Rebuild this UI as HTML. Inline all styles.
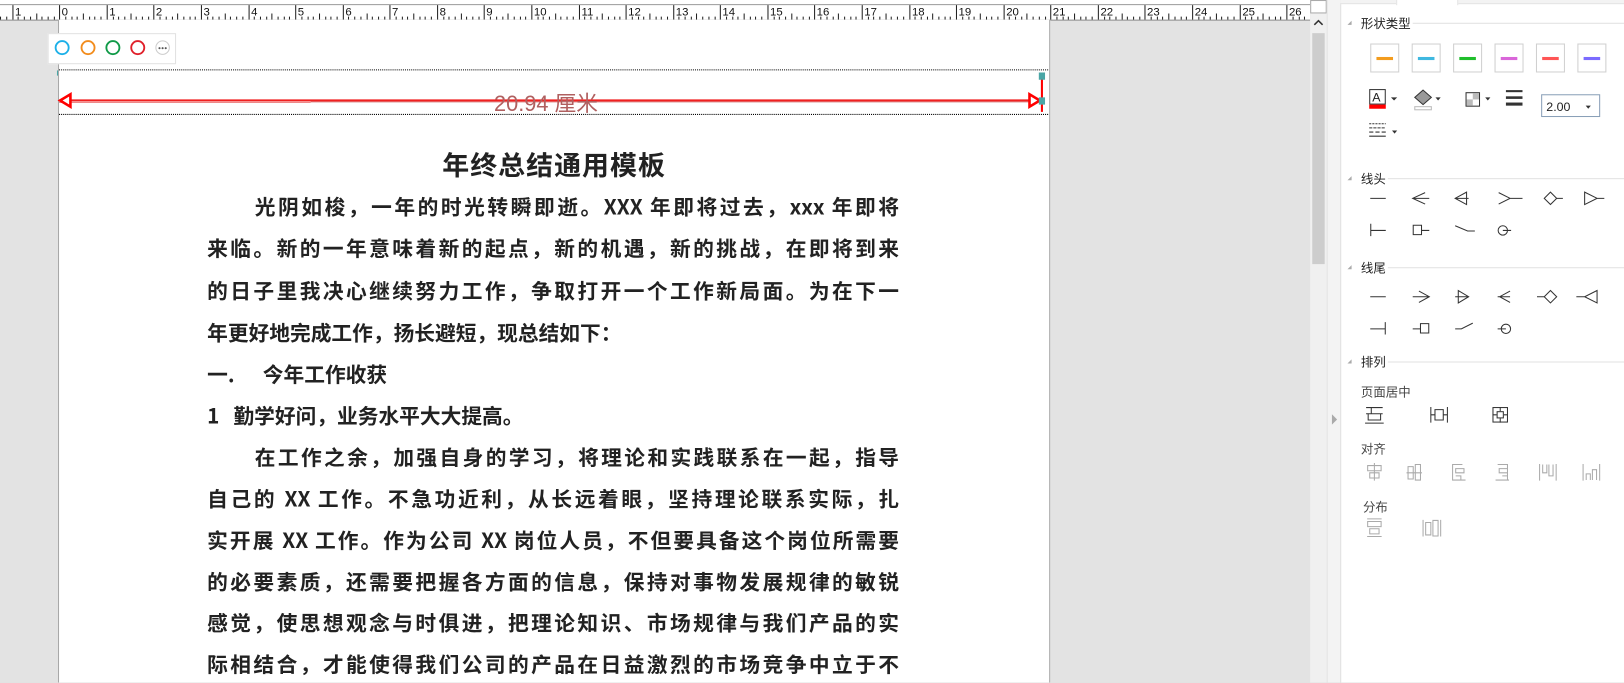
<!DOCTYPE html>
<html><head><meta charset="utf-8">
<style>
*{margin:0;padding:0;box-sizing:border-box}
body{width:1624px;height:682px;overflow:hidden;background:#e3e3e3;position:relative;font-family:"Liberation Sans","Noto Sans CJK SC",sans-serif}
#wrap{position:absolute;left:0;top:0;width:1568px;height:659px;transform:scale(1.03571);transform-origin:0 0;overflow:hidden;background:#e3e3e3}
.abs{position:absolute}
#page{left:56px;top:19px;width:958px;height:663px;background:#fff;border-left:1px solid #a8a8a8;border-right:1px solid #a8a8a8}
.txt{position:absolute;left:200px;width:668px;font-size:20px;font-weight:bold;color:#222;font-family:"Noto Sans CJK SC",sans-serif;white-space:nowrap;text-align:justify;text-align-last:justify;line-height:26px;letter-spacing:0px}
.pn{font-family:"Liberation Sans","Noto Sans CJK SC",sans-serif;font-size:12px;color:#222;position:absolute}
.sec{position:absolute;height:1px;background:#e2e2e2}
.tri{position:absolute;width:0;height:0;border-left:4px solid transparent;border-bottom:4px solid #aaa}
.cb{position:absolute;width:28px;height:28px;border:1px solid #d0d0d0;background:#fff}
.cb i{position:absolute;left:5px;top:12px;width:16px;height:3px}
</style></head><body><div id="wrap">
<svg class="abs" style="left:0;top:0" width="1265" height="20" id="ruler">
<rect x="0" y="0" width="1265" height="20" fill="#fff"/>
<line x1="0" y1="4.5" x2="1265" y2="4.5" stroke="#999"/>
<line x1="0" y1="19.5" x2="1265" y2="19.5" stroke="#888"/>
</svg>
<div id="page" class="abs"></div>
<div class="abs" style="left:46px;top:32px;width:124px;height:30px;background:#fff;border:1px solid #e2e2e2"></div>
<svg class="abs" style="left:46px;top:32px" width="124" height="30">
<circle cx="14" cy="14" r="6.3" fill="none" stroke="#1cb0e8" stroke-width="1.8"/>
<circle cx="39" cy="14" r="6.3" fill="none" stroke="#f28c1c" stroke-width="1.8"/>
<circle cx="63" cy="14" r="6.3" fill="none" stroke="#109a48" stroke-width="1.8"/>
<circle cx="87" cy="14" r="6.3" fill="none" stroke="#e0202a" stroke-width="1.8"/>
<circle cx="111" cy="14" r="6.5" fill="#fff" stroke="#ccc"/><circle cx="108" cy="14.5" r="1" fill="#555"/><circle cx="111" cy="14.5" r="1" fill="#555"/><circle cx="114" cy="14.5" r="1" fill="#555"/>
</svg>
<svg class="abs" style="left:0;top:60px" width="1020" height="60">
<line x1="57" y1="7.5" x2="1013" y2="7.5" stroke="#000" stroke-dasharray="1,1"/>
<line x1="57" y1="50.5" x2="1013" y2="50.5" stroke="#000" stroke-dasharray="1,1"/>
<line x1="57" y1="37" x2="1005" y2="37" stroke="#f02020" stroke-width="2"/>
<line x1="57" y1="39" x2="300" y2="39" stroke="#e88" stroke-width="1"/>
<line x1="300" y1="38.5" x2="1000" y2="38.5" stroke="#d99" stroke-width="1"/>
<polygon points="58,37 68,31 68,43" fill="#fff" stroke="#f00" stroke-width="2.5"/>
<polygon points="1004,37 994,31 994,43" fill="#fff" stroke="#f00" stroke-width="2.5"/>
<line x1="1006" y1="15" x2="1006" y2="48" stroke="#f00" stroke-width="2"/>
<rect x="1003" y="10" width="6" height="7" fill="#4aa6a6"/>
<rect x="1003" y="34" width="6" height="7" fill="#4aa6a6"/>
<rect x="55" y="8" width="1" height="5" fill="#4aa6a6"/>
</svg>
<div class="abs" style="left:477px;top:84px;font-size:21px;color:#b06060;font-family:'Liberation Sans','Noto Sans CJK SC',sans-serif">20.94 厘米</div>
<div class="abs" style="left:56px;width:958px;top:140px;text-align:center;font-size:26px;font-weight:bold;color:#222;font-family:'Noto Sans CJK SC',sans-serif;letter-spacing:1px">年终总结通用模板</div>
<div class="txt" style="top:186px;left:246px;width:622px">光阴如梭，一年的时光转瞬即逝。XXX 年即将过去，xxx 年即将</div>
<div class="txt" style="top:226px">来临。新的一年意味着新的起点，新的机遇，新的挑战，在即将到来</div>
<div class="txt" style="top:267px">的日子里我决心继续努力工作，争取打开一个工作新局面。为在下一</div>
<div class="txt" style="top:308px;text-align-last:left;width:auto">年更好地完成工作，扬长避短，现总结如下：</div>
<div class="txt" style="top:348px;text-align-last:left;width:auto">一.&nbsp;&nbsp;&nbsp;&nbsp;&nbsp;&nbsp;今年工作收获</div>
<div class="txt" style="top:388px;text-align-last:left;width:auto">1&nbsp;&nbsp;&nbsp;勤学好问，业务水平大大提高。</div>
<div class="txt" style="top:428px;left:246px;width:622px">在工作之余，加强自身的学习，将理论和实践联系在一起，指导</div>
<div class="txt" style="top:468px">自己的 XX 工作。不急功近利，从长远着眼，坚持理论联系实际，扎</div>
<div class="txt" style="top:508px">实开展 XX 工作。作为公司 XX 岗位人员，不但要具备这个岗位所需要</div>
<div class="txt" style="top:548px">的必要素质，还需要把握各方面的信息，保持对事物发展规律的敏锐</div>
<div class="txt" style="top:588px">感觉，使思想观念与时俱进，把理论知识、市场规律与我们产品的实</div>
<div class="txt" style="top:628px">际相结合，才能使得我们公司的产品在日益激烈的市场竞争中立于不</div>
<div class="abs" style="left:1265px;top:0;width:16px;height:682px;background:#f0f0f0"></div>
<div class="abs" style="left:1265px;top:0;width:16px;height:13px;background:#fff;border:1px solid #aaa"></div>
<svg class="abs" style="left:1265px;top:16px" width="16" height="12"><polyline points="4,8 8,4 12,8" fill="none" stroke="#333" stroke-width="1.5"/></svg>
<div class="abs" style="left:1267px;top:32px;width:12px;height:223px;background:#cdcdcd"></div>
<div class="abs" style="left:1281px;top:0;width:13px;height:682px;background:#f3f3f3;border-left:1px solid #e4e4e4"></div>
<div class="abs" style="left:1286px;top:400px;width:0;height:0;border-top:5px solid transparent;border-bottom:5px solid transparent;border-left:5px solid #aaa"></div>
<div class="abs" style="left:1294px;top:0;width:330px;height:682px;background:#fff;border-left:1px solid #e0e0e0"></div>
<div class="abs" style="left:1294px;top:0;width:330px;height:4px;background:#f3f3f3;border-bottom:1px solid #e4e4e4"></div>
<div class="abs" style="left:1348px;top:0;width:60px;height:5px;background:#fff;border-left:1px solid #e4e4e4;border-right:1px solid #e4e4e4"></div>
<div class="tri" style="left:1301px;top:20px"></div><div class="pn" style="left:1314px;top:14px">形状类型</div><div class="sec" style="left:1364px;top:22px;width:260px"></div>
<div class="cb" style="left:1323px;top:42px"><i style="background:#f39c1e"></i></div>
<div class="cb" style="left:1363px;top:42px"><i style="background:#3fb8e0"></i></div>
<div class="cb" style="left:1403px;top:42px"><i style="background:#1fbe2b"></i></div>
<div class="cb" style="left:1443px;top:42px"><i style="background:#d966d9"></i></div>
<div class="cb" style="left:1483px;top:42px"><i style="background:#ff5555"></i></div>
<div class="cb" style="left:1523px;top:42px"><i style="background:#7b6bff"></i></div>
<svg class="abs" style="left:1320px;top:84px" width="300" height="56">
<rect x="2.5" y="2.5" width="15" height="14" fill="#fff" stroke="#333"/><text x="5" y="14" font-size="12" font-family="Liberation Sans" fill="#222">A</text><rect x="2" y="17" width="16" height="4" fill="#f00"/>
<polygon points="23,10 29,10 26,13" fill="#333"/>
<polygon points="54,3 62,10 54,17 46,10" fill="#999" stroke="#333"/><rect x="46" y="19" width="16" height="3" fill="#fff" stroke="#bbb"/>
<polygon points="66,10 71,10 68.5,13" fill="#333"/>
<rect x="95.5" y="5.5" width="13" height="13" fill="#fff" stroke="#333"/><rect x="102" y="6" width="6" height="6" fill="#bbb"/><rect x="96" y="12" width="6" height="6" fill="#bbb"/>
<polygon points="114,10 119,10 116.5,13" fill="#333"/>
<rect x="134" y="3" width="16" height="2" fill="#333"/><rect x="134" y="9" width="16" height="2.5" fill="#333"/><rect x="134" y="15" width="16" height="3" fill="#333"/>
<rect x="168.5" y="7.5" width="56" height="21" fill="#fff" stroke="#8aa0b8"/>
<text x="173" y="23" font-size="12" font-family="Liberation Sans" fill="#222">2.00</text>
<polygon points="211,18 216,18 213.5,21" fill="#333"/>
<g stroke="#333"><line x1="2" y1="35.5" x2="18" y2="35.5" stroke-dasharray="2,1"/><line x1="2" y1="39.5" x2="18" y2="39.5" stroke-dasharray="3,1"/><line x1="2" y1="43.5" x2="18" y2="43.5" stroke-dasharray="4,2"/><line x1="2" y1="47.5" x2="18" y2="47.5"/></g>
<polygon points="24,42 29,42 26.5,45" fill="#333"/>
</svg>
<div class="tri" style="left:1301px;top:170px"></div><div class="pn" style="left:1314px;top:164px">线头</div><div class="sec" style="left:1340px;top:172px;width:284px"></div>
<svg class="abs" style="left:1314px;top:180px" width="240" height="160" fill="none" stroke="#333" stroke-width="1">
<line x1="9" y1="11.5" x2="24" y2="11.5"/>
<path d="M66 11.5H50M62 6L50 11.5L62 17"/>
<path d="M104 11.5H91M102 5.5L91 11.5L102 17.5Z"/>
<path d="M133 6L144 11.5L133 17M144 11.5H156"/>
<path d="M183 5.5L189 11.5L183 17.5L177 11.5ZM189 11.5H195"/>
<path d="M216 5.5L228 11.5L216 17.5ZM228 11.5H235"/>
<path d="M9.5 36V48M10 42.5H24"/>
<path d="M50.5 37.5h8v9h-8zM58 42.5H66"/>
<path d="M91 38L103 43H110"/>
<circle cx="137" cy="42.5" r="4.5"/><path d="M137 42.5H145"/>
<line x1="9" y1="106.5" x2="24" y2="106.5"/>
<path d="M50 106.5H66M56 101L66 106.5L56 112"/>
<path d="M91 106.5H104M94 100.5L104 106.5L94 112.5Z"/>
<path d="M132 106.5H144M144 101L134 106.5L144 112"/>
<path d="M183 100.5L177 106.5L183 112.5L189 106.5ZM170 106.5H177"/>
<path d="M228 100.5L216 106.5L228 112.5ZM208 106.5H216"/>
<path d="M23.5 131V143M9 137.5H23"/>
<path d="M57.5 132.5h8v9h-8zM50 137.5H58"/>
<path d="M91 137.5H97L108 132"/>
<circle cx="140" cy="137.5" r="4.5"/><path d="M132 137.5H140"/>
</svg>
<div class="tri" style="left:1301px;top:256px"></div><div class="pn" style="left:1314px;top:250px">线尾</div><div class="sec" style="left:1340px;top:258px;width:284px"></div>
<div class="tri" style="left:1301px;top:347px"></div><div class="pn" style="left:1314px;top:341px">排列</div><div class="sec" style="left:1340px;top:349px;width:284px"></div>
<div class="pn" style="left:1314px;top:370px;color:#444">页面居中</div>
<svg class="abs" style="left:1314px;top:390px" width="240" height="130" fill="none" stroke-width="1">
<g stroke="#333"><path d="M5 3.5H21M10 3.5V9.5M5 9.5H21M7 9.5V15.5H19V9.5M4 18.5H22"/>
<path d="M67.5 3V18M83.5 3V18M68 10.5H71M80 10.5H83M71.5 5.5h8v10h-8z"/>
<rect x="127.5" y="3.5" width="14" height="14"/><rect x="131.5" y="7.5" width="6" height="6"/><path d="M134.5 3V7M134.5 14V18M127 10.5H131M138 10.5H142"/></g>
<g stroke="#aaa"><path d="M6.5 59.5h13v5h-13zM8.5 66.5h9v5h-9zM13 57V74"/>
<path d="M45.5 60.5h5v12h-5zM52.5 58.5h5v15h-5zM44 66.5H59"/>
<path d="M88 58.5H98M88.5 58v16M91.5 62.5h8v4h-8zM91.5 69.5h5v4h-5M88 73.5H101"/>
<path d="M132 58.5H142M141.5 58v16M133.5 62.5h8v4h-8zM136.5 69.5h5v4h-5M130 73.5H143"/>
<path d="M172.5 58v16M188.5 58v16M175.5 58.5v8h4v-8M181.5 58.5v11h4v-11"/>
<path d="M214.5 58v16M230.5 58v16M217.5 73.5v-6h4v6M223.5 73.5v-10h4v10"/>
<path d="M6.5 113.5h13v5h-13zM8.5 120.5h9v5h-9zM6 111H20M6 128H20"/>
<path d="M62.5 114.5h5v12h-5zM69.5 112.5h5v15h-5zM60 112v16M77 112v16"/></g>
</svg>
<div class="pn" style="left:1314px;top:425px;color:#444">对齐</div>
<div class="pn" style="left:1316px;top:481px;color:#444">分布</div>
</div>
<script>
var s=document.getElementById('ruler'),u=45.57,o=57.3,h='';
for(var n=-2;n<=27;n++){var x=o+n*u;
 for(var k=1;k<8;k++){var xx=Math.round(x+k*u/8)+0.5;var len=(k==4)?6:3;h+='<line x1="'+xx+'" y1="'+(19-len)+'" x2="'+xx+'" y2="19" stroke="#222"/>';}
 var X=Math.round(x)+0.5;h+='<line x1="'+X+'" y1="5" x2="'+X+'" y2="19" stroke="#222"/>';
 h+='<text x="'+(X+2)+'" y="15" font-size="11" font-family="Liberation Sans" fill="#111">'+Math.abs(n)+'</text>';}
s.insertAdjacentHTML('beforeend',h);
</script>
</body></html>
